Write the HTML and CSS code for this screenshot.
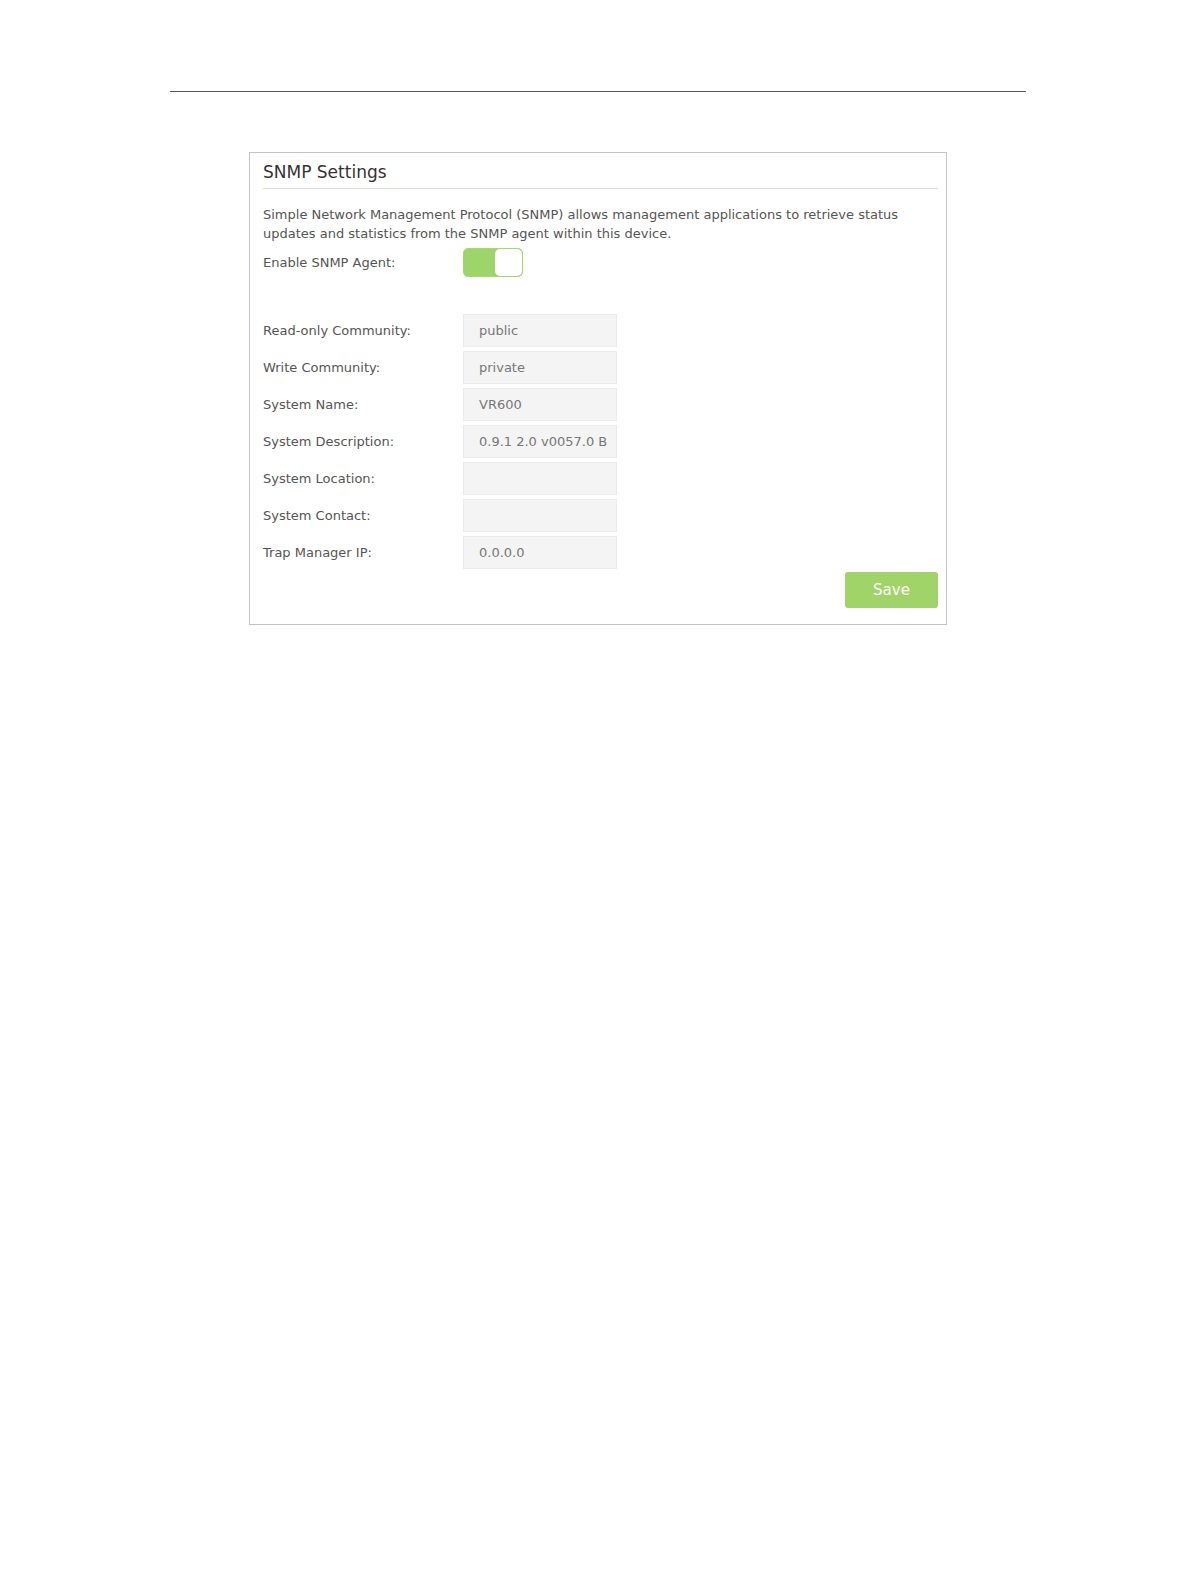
FILE: index.html
```html
<!DOCTYPE html>
<html lang="en">
<head>
    <meta charset="UTF-8">
    <meta name="viewport" content="width=device-width, initial-scale=1.0">
    <title>SNMP Settings</title>
    <link rel="stylesheet" href="styles.css">
</head>
<body>
    <div class="page">
        <hr class="page-rule">
        <div class="panel">
            <h2 class="panel-title">SNMP Settings</h2>
            <p class="panel-desc">Simple Network Management Protocol (SNMP) allows management applications to retrieve status updates and statistics from the SNMP agent within this device.</p>

            <div class="row row-toggle">
                <label class="row-label">Enable SNMP Agent:</label>
                <div class="toggle on"><span class="knob"></span></div>
            </div>

            <div class="fields">
                <div class="row">
                    <label class="row-label">Read-only Community:</label>
                    <input class="text-input" type="text" value="public">
                </div>
                <div class="row">
                    <label class="row-label">Write Community:</label>
                    <input class="text-input" type="text" value="private">
                </div>
                <div class="row">
                    <label class="row-label">System Name:</label>
                    <input class="text-input" type="text" value="VR600">
                </div>
                <div class="row">
                    <label class="row-label">System Description:</label>
                    <input class="text-input" type="text" value="0.9.1 2.0 v0057.0 Build 160516 Rel.32811n">
                </div>
                <div class="row">
                    <label class="row-label">System Location:</label>
                    <input class="text-input" type="text" value="">
                </div>
                <div class="row">
                    <label class="row-label">System Contact:</label>
                    <input class="text-input" type="text" value="">
                </div>
                <div class="row">
                    <label class="row-label">Trap Manager IP:</label>
                    <input class="text-input" type="text" value="0.0.0.0">
                </div>
            </div>

            <div class="actions">
                <button class="btn-save">Save</button>
            </div>
        </div>
    </div>
</body>
</html>
```

FILE: styles.css
```css
body {
    margin: 0;
    background: #fff;
    font-family: "DejaVu Sans", Verdana, sans-serif;
    color: #555;
}
.page {
    width: 856px;
    margin: 0 0 0 170px;
    padding-top: 91px;
}
.page-rule {
    margin: 0;
    border: 0;
    border-top: 1px solid #555;
}
.panel {
    width: 698px;
    height: 473px;
    margin: 60px 0 0 79px;
    border: 1px solid #c4c4c4;
    padding: 0 8px 0 13px;
    box-sizing: border-box;
}
.panel-title {
    margin: 0;
    padding: 9px 0 6px;
    font-size: 17px;
    font-weight: normal;
    color: #333;
    border-bottom: 1px solid #ddd;
    line-height: 20px;
}
.panel-desc {
    margin: 16px 0 0;
    font-size: 13px;
    line-height: 19px;
    color: #555;
}
.row {
    display: flex;
    align-items: center;
    font-size: 13px;
}
.row-label {
    width: 200px;
    flex-shrink: 0;
}
.row-toggle {
    margin-top: 5px;
    height: 29px;
}
.toggle {
    width: 60px;
    height: 29px;
    box-sizing: border-box;
    border-radius: 5px;
    border: 1px solid #a5d871;
    background: #9ed56b;
    display: flex;
    justify-content: flex-end;
}
.knob {
    width: 27px;
    height: 27px;
    background: #fff;
    border-radius: 5px;
}
.fields {
    margin-top: 37px;
    display: flex;
    flex-direction: column;
    gap: 4px;
}
.text-input {
    width: 154px;
    height: 33px;
    box-sizing: border-box;
    padding: 0 8px 0 15px;
    border: 1px solid #ebebeb;
    background: #f4f4f4;
    font-family: "DejaVu Sans", Verdana, sans-serif;
    font-size: 13px;
    color: #777;
    outline: none;
}
.actions {
    display: flex;
    justify-content: flex-end;
    margin-top: 3px;
}
.btn-save {
    width: 93px;
    height: 36px;
    border: 0;
    border-radius: 3px;
    background: #a0d468;
    color: #fff;
    font-family: "DejaVu Sans", Verdana, sans-serif;
    font-size: 15px;
}
```
